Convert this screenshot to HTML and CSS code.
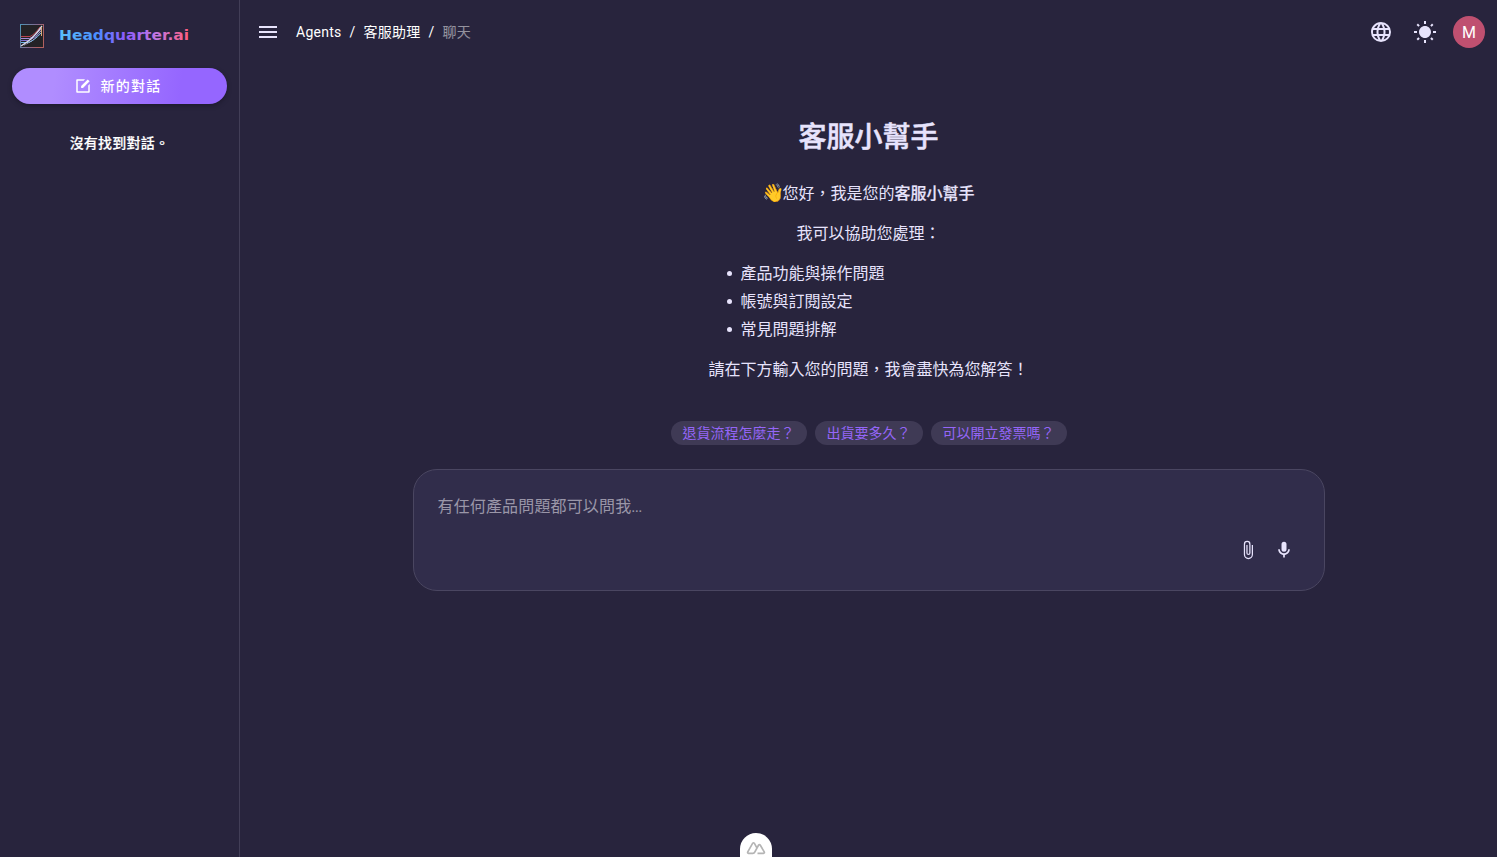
FILE: index.html
```html
<!DOCTYPE html>
<html lang="zh-Hant">
<head>
    <meta charset="UTF-8">
    <meta name="viewport" content="width=device-width, initial-scale=1.0">
    <title>Headquarter.ai</title>
    <link rel="stylesheet" href="styles.css">
</head>
<body>
    <!-- Sidebar -->
    <aside class="sidebar">
        <div class="brand">
            <svg class="brand-logo" viewBox="0 0 24 24">
                <defs>
                    <linearGradient id="frame" x1="0" y1="0" x2="1" y2="0.4">
                        <stop offset="0" stop-color="#4f93b4"/>
                        <stop offset="0.6" stop-color="#806a90"/>
                        <stop offset="1" stop-color="#b0605f"/>
                    </linearGradient>
                </defs>
                <rect x="0.5" y="0.5" width="23" height="23" fill="#232226" stroke="url(#frame)"/>
                <g fill="none" stroke-width="1">
                    <path d="M1 12.5H10Q14 11 20 3" stroke="#b8434f"/>
                    <path d="M1 14.5H9.500Q14 13 21 5" stroke="#a58ad8"/>
                    <path d="M1 16.5H9Q15 14 21 7" stroke="#7d6fd0"/>
                    <path d="M1 18.500H8Q14 17 21 9" stroke="#6fb5e8"/>
                    <path d="M1 22Q9 17 13 13T22 2" stroke="#d8d8e8" stroke-width="1.300"/>
                    <path d="M4 21Q12 18 16 13T21.500 6" stroke="#b9b4cc" stroke-dasharray="1.500 1"/>
                    <path d="M21.500 3V12" stroke="#d8a878"/>
                </g>
            </svg>
            <svg class="brand-name" viewBox="0 0 132 20">
                <defs>
                    <linearGradient id="brand" x1="0" y1="0" x2="1" y2="0">
                        <stop offset="0" stop-color="#5bc0f8"/>
                        <stop offset="0.28" stop-color="#4a90ff"/>
                        <stop offset="0.5" stop-color="#8a5cff"/>
                        <stop offset="0.75" stop-color="#c477e0"/>
                        <stop offset="1" stop-color="#ff5c7c"/>
                    </linearGradient>
                </defs>
                <text x="0" y="15" textLength="130" lengthAdjust="spacingAndGlyphs" fill="url(#brand)">Headquarter.ai</text>
            </svg>
        </div>
        <button class="new-chat">
            <svg viewBox="0 0 24 24">
                <path d="M14.757 2.997L12.757 4.997H5V18.997H19V11.239L21 9.239V19.997C21 20.549 20.552 20.997 20 20.997H4C3.448 20.997 3 20.549 3 19.997V3.997C3 3.445 3.448 2.997 4 2.997H14.757Z"/>
                <path d="M18.300 3.200L20.800 5.700L12 14.500H9.500V12Z"/>
            </svg>
            <span>新的對話</span>
        </button>
        <p class="empty">沒有找到對話。</p>
    </aside>

    <div class="page">
        <!-- Top bar -->
        <header class="topbar">
            <svg class="icon" viewBox="0 0 24 24"><path d="M3 6H21V8H3V6M3 11H21V13H3V11M3 16H21V18H3V16Z"/></svg>
            <nav class="breadcrumbs">
                <span>Agents</span>
                <span class="divider">/</span>
                <span>客服助理</span>
                <span class="divider">/</span>
                <span class="current">聊天</span>
            </nav>
            <div class="actions">
                <svg class="icon" viewBox="0 0 24 24"><path d="M16.36,14C16.44,13.34 16.5,12.68 16.5,12C16.5,11.32 16.44,10.66 16.36,10H19.74C19.9,10.64 20,11.31 20,12C20,12.69 19.9,13.36 19.74,14M14.59,19.56C15.19,18.45 15.65,17.25 15.97,16H18.92C17.96,17.65 16.43,18.93 14.59,19.56M14.34,14H9.66C9.56,13.34 9.5,12.68 9.5,12C9.5,11.32 9.56,10.65 9.66,10H14.34C14.43,10.65 14.5,11.32 14.5,12C14.5,12.68 14.43,13.34 14.34,14M12,19.96C11.17,18.76 10.5,17.43 10.09,16H13.91C13.5,17.43 12.83,18.76 12,19.96M8,8H5.08C6.03,6.34 7.57,5.06 9.4,4.44C8.8,5.55 8.35,6.75 8,8M5.08,16H8C8.35,17.25 8.8,18.45 9.4,19.56C7.57,18.93 6.03,17.65 5.08,16M4.26,14C4.1,13.36 4,12.69 4,12C4,11.31 4.1,10.64 4.26,10H7.64C7.56,10.66 7.5,11.32 7.5,12C7.5,12.68 7.56,13.34 7.64,14M12,4.03C12.83,5.23 13.5,6.57 13.91,8H10.09C10.5,6.57 11.17,5.23 12,4.03M18.92,8H15.97C15.65,6.75 15.19,5.55 14.59,4.44C16.43,5.07 17.96,6.34 18.92,8M12,2C6.47,2 2,6.5 2,12A10,10 0 0,0 12,22A10,10 0 0,0 22,12A10,10 0 0,0 12,2Z"/></svg>
                <svg class="icon" viewBox="0 0 24 24"><path d="M3.55 19.09L4.96 20.5L6.76 18.71L5.34 17.29M12 6C8.69 6 6 8.69 6 12S8.69 18 12 18 18 15.31 18 12C18 8.68 15.31 6 12 6M20 13H23V11H20M17.24 18.71L19.04 20.5L20.45 19.09L18.66 17.29M20.45 5L19.04 3.6L17.24 5.39L18.66 6.81M13 1H11V4H13M6.76 5.39L4.96 3.6L3.55 5L5.34 6.81L6.76 5.39M1 13H4V11H1M13 20H11V23H13"/></svg>
                <div class="avatar">M</div>
            </div>
        </header>

        <!-- Chat -->
        <main class="chat">
            <h1>客服小幫手</h1>
            <div class="welcome">
                <p><span class="wave">👋</span>您好，我是您的<strong>客服小幫手</strong></p>
                <p>我可以協助您處理：</p>
                <ul>
                    <li>產品功能與操作問題</li>
                    <li>帳號與訂閱設定</li>
                    <li>常見問題排解</li>
                </ul>
                <p>請在下方輸入您的問題，我會盡快為您解答！</p>
            </div>
            <div class="chips">
                <span class="chip">退貨流程怎麼走？</span>
                <span class="chip">出貨要多久？</span>
                <span class="chip">可以開立發票嗎？</span>
            </div>
            <div class="composer">
                <div class="placeholder">有任何產品問題都可以問我<span class="dots">...</span></div>
                <div class="tools">
                    <svg viewBox="0 0 24 24"><path d="M16.5,6V17.5A4,4 0 0,1 12.5,21.5A4,4 0 0,1 8.5,17.5V5A2.5,2.5 0 0,1 11,2.5A2.5,2.5 0 0,1 13.5,5V15.5A1,1 0 0,1 12.5,16.5A1,1 0 0,1 11.5,15.5V6H10V15.5A2.5,2.5 0 0,0 12.5,18A2.5,2.5 0 0,0 15,15.5V5A4,4 0 0,0 11,1A4,4 0 0,0 7,5V17.5A5.5,5.5 0 0,0 12.5,23A5.5,5.5 0 0,0 18,17.5V6H16.5Z"/></svg>
                    <svg viewBox="0 0 24 24"><path d="M12,2A3,3 0 0,1 15,5V11A3,3 0 0,1 12,14A3,3 0 0,1 9,11V5A3,3 0 0,1 12,2M19,11C19,14.53 16.39,17.44 13,17.93V21H11V17.93C7.61,17.44 5,14.53 5,11H7A5,5 0 0,0 12,16A5,5 0 0,0 17,11H19Z"/></svg>
                </div>
            </div>
        </main>
    </div>

    <!-- Devtools handle -->
    <div class="devtools">
        <svg viewBox="0 0 20 14"><path d="M11.500 12.300H17.400Q18.800 12 18.200 10.800L14.200 4Q13.400 3.100 12.600 4L8.900 10.800Q8.200 12.200 6.800 12.300H2.500Q1.200 12 1.800 10.800L6.700 2.200Q7.500 1.300 8.300 2.200L10.600 6.300"/></svg>
    </div>
</body>
</html>
```
FILE: styles.css
```css
* {
    box-sizing: border-box;
}

body {
    margin: 0;
    display: flex;
    height: 100vh;
    overflow: hidden;
    background-color: #28243d;
    color: #e7e3fc;
    font-family: Roboto, "Noto Sans CJK TC", sans-serif;
    font-size: 16px;
}

svg {
    display: block;
    fill: currentColor;
}

.sidebar {
    width: 240px;
    flex: none;
    padding: 0 12px;
    border-right: 1px solid #423e57;
}

.brand {
    display: flex;
    padding: 24px 8px 0;
    height: 68px;
}

.brand-logo {
    width: 24px;
    height: 24px;
}

.brand-name {
    width: 132px;
    height: 20px;
    margin: 1px 0 0 15px;
    overflow: visible;
    font: bold 14px "DejaVu Sans", sans-serif;
}

.new-chat {
    display: flex;
    align-items: center;
    justify-content: center;
    gap: 9px;
    width: 100%;
    height: 36px;
    padding: 0 4px 0 0;
    border: none;
    border-radius: 18px;
    background: linear-gradient(98deg, #b08dff 20%, #9566ff 78%);
    box-shadow: 0 2px 4px rgba(19, 17, 32, 0.5);
    color: #fff;
    font: 500 14px Roboto, "Noto Sans CJK TC", sans-serif;
    letter-spacing: 1.2px;
}

.new-chat svg {
    width: 18px;
    height: 18px;
}

.new-chat span {
    padding-bottom: 2px;
}

.empty {
    margin: 28px 0 0;
    text-align: center;
    color: #fff;
    font-size: 14px;
    font-weight: 500;
    line-height: 22px;
    letter-spacing: 0.25px;
    -webkit-text-stroke: 0.2px #fff;
}

.page {
    flex: 1;
}

.topbar {
    display: flex;
    align-items: center;
    height: 64px;
    padding: 0 12px 0 16px;
}

.icon {
    width: 24px;
    height: 24px;
}

.breadcrumbs {
    display: flex;
    margin-left: 16px;
    color: #fff;
    font-size: 14px;
    line-height: 20px;
    letter-spacing: 0.25px;
}

.divider {
    width: 22px;
    text-align: center;
}

.current {
    opacity: 0.5;
}

.actions {
    display: flex;
    align-items: center;
    gap: 20px;
    margin-left: auto;
}

.avatar {
    width: 32px;
    height: 32px;
    margin-left: -4px;
    border-radius: 50%;
    background-color: #bf5070;
    color: #fff;
    text-align: center;
    line-height: 33px;
}

.chat {
    display: flex;
    flex-direction: column;
    align-items: center;
    padding-top: 52px;
}

h1 {
    margin: 0 0 21px;
    font-size: 28px;
    font-weight: 500;
    line-height: 43px;
    -webkit-text-stroke: 0.5px #e7e3fc;
}

.welcome {
    text-align: center;
    line-height: 28px;
    width: 320px;
}

.welcome p {
    margin: 0 0 12px;
    white-space: nowrap;
}

.wave {
    display: inline-block;
    width: 20px;
    height: 28px;
    vertical-align: top;
    font-size: 18px;
    line-height: 26px;
}

.welcome strong {
    font-weight: 500;
    -webkit-text-stroke: 0.2px #e7e3fc;
}

.welcome ul {
    margin: 0 0 12px;
    padding-left: 32px;
    text-align: left;
    list-style: none;
}

.welcome li {
    display: flex;
    align-items: center;
}

.welcome li::before {
    content: "";
    width: 5px;
    height: 5px;
    margin: 0 9px 1px -14px;
    border-radius: 50%;
    background-color: #e7e3fc;
}

.chips {
    display: flex;
    gap: 8px;
    margin-top: 25px;
}

.chip {
    height: 24px;
    padding: 0 12px;
    border-radius: 12px;
    background-color: #3f3a55;
    color: #9566f8;
    font-size: 14px;
    line-height: 24px;
}

.composer {
    width: 912px;
    height: 122px;
    margin-top: 24px;
    padding: 25px 24px;
    border: 1px solid #4a4661;
    border-radius: 24px;
    background-color: #312d4b;
}

.placeholder {
    color: #9a96a8;
    line-height: 24px;
    letter-spacing: 0.15px;
}

.dots {
    letter-spacing: -0.7px;
}

.tools {
    display: flex;
    justify-content: flex-end;
    gap: 16px;
    margin: 21px 6px 0 0;
}

.tools svg {
    width: 20px;
    height: 20px;
}

.devtools {
    position: absolute;
    left: 740px;
    bottom: 0;
    width: 32px;
    height: 24px;
    padding: 8px 6px 0;
    border-radius: 16px 16px 0 0;
    background-color: #fff;
}

.devtools svg {
    width: 20px;
    height: 14px;
    fill: none;
    stroke: #b4b4b4;
    stroke-width: 1.7;
}
```
